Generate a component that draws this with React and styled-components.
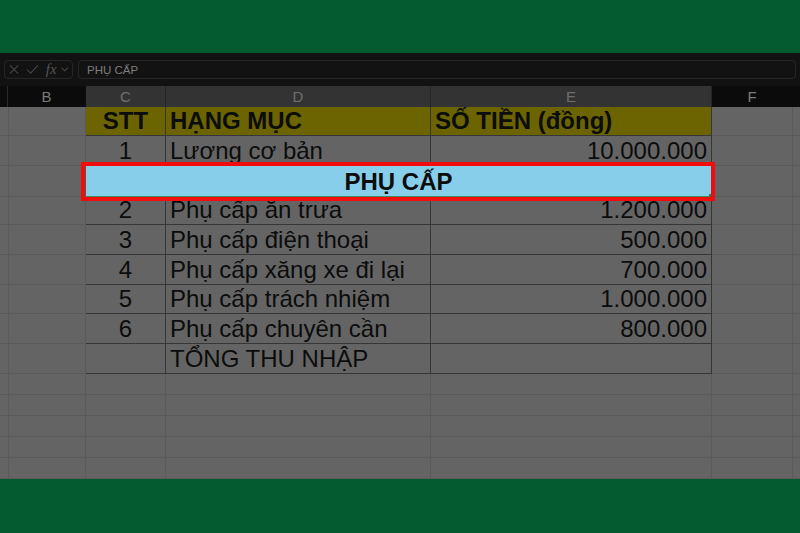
import React from 'react'
import styled, { createGlobalStyle, css } from 'styled-components'

const GlobalStyle = createGlobalStyle`
  html, body {
    margin: 0;
    padding: 0;
    background: #045b2f;
  }
  * {
    box-sizing: border-box;
  }
`

const COLS = '8px 78px 80px 265px 281px 81px 1fr'

const Screen = styled.div`
  width: 800px;
  height: 533px;
  display: flex;
  flex-direction: column;
  overflow: hidden;
  font-family: 'Liberation Sans', Arial, sans-serif;
`

const Band = styled.div`
  height: ${p => p.h}px;
  flex: none;
  background: #045b2f;
`

const FormulaBar = styled.div`
  height: 33px;
  flex: none;
  background: #121212;
  display: flex;
  align-items: center;
  gap: 5px;
  padding: 0 4px;
`

const NameBox = styled.div`
  width: 69px;
  height: 19px;
  border: 1px solid #262626;
  border-radius: 4px;
  display: flex;
  align-items: center;
  gap: 7px;
  padding: 0 4px;
  color: #484848;
`

const FxLabel = styled.span`
  font-family: 'Liberation Serif', serif;
  font-style: italic;
  font-size: 15px;
  line-height: 1;
  color: #555555;
  margin-right: -3px;
`

const FormulaInput = styled.div`
  flex: 1;
  height: 19px;
  border: 1px solid #262626;
  border-radius: 4px;
  display: flex;
  align-items: center;
  padding-left: 8px;
  font-size: 11.5px;
  color: #7d7d7d;
`

const HeaderRow = styled.div`
  height: 21px;
  flex: none;
  display: grid;
  grid-template-columns: ${COLS};
  background: #0b0b0b;
`

const ColHead = styled.div`
  display: flex;
  align-items: center;
  justify-content: center;
  font-size: 15px;
  color: ${p => (p.selected ? '#6f6f6f' : '#7a7a7a')};
  background: ${p => (p.selected ? '#333333' : '#0b0b0b')};
  border-right: 1px solid ${p => (p.selected ? '#262626' : '#0b0b0b')};
  ${p =>
    p.edge &&
    css`
      border-right: 1px solid #2a2a2a;
    `}
`

const Sheet = styled.div`
  flex: 1;
  background: #646464;
  overflow: hidden;
`

const Row = styled.div`
  height: ${p => p.h}px;
  display: grid;
  grid-template-columns: ${COLS};
`

const Cell = styled.div`
  position: relative;
  display: flex;
  align-items: center;
  white-space: nowrap;
  font-size: 24px;
  color: #0c0c0c;
  padding: 0 4px;
  justify-content: ${p => p.align || 'flex-start'};
  font-weight: ${p => (p.bold ? 700 : 400)};
  grid-column: ${p => p.span || 'auto'};
  background: ${p => p.bg || 'transparent'};
  border-right: 1px solid ${p => (p.table ? '#363636' : '#5a5a5a')};
  border-bottom: 1px solid ${p => (p.table ? '#363636' : '#5a5a5a')};
`

const Highlighted = styled(Cell)`
  background: #87ceeb;
  border-bottom: 1px solid #3f8a5a;
  z-index: 2;
  padding-top: 2px;

  &::after {
    content: '';
    position: absolute;
    left: -5px;
    right: -4px;
    top: -4px;
    bottom: -5px;
    border: 4px solid #f20d0d;
    pointer-events: none;
  }
`

const Handle = styled.span`
  position: absolute;
  right: -2px;
  bottom: -2px;
  width: 4px;
  height: 4px;
  background: #2f7a4a;
`

const items = [
  ['1', 'Lương cơ bản', '10.000.000'],
  null,
  ['2', 'Phụ cấp ăn trưa', '1.200.000'],
  ['3', 'Phụ cấp điện thoại', '500.000'],
  ['4', 'Phụ cấp xăng xe đi lại', '700.000'],
  ['5', 'Phụ cấp trách nhiệm', '1.000.000'],
  ['6', 'Phụ cấp chuyên cần', '800.000'],
  ['', 'TỔNG THU NHẬP', ''],
]

const heights = [30, 30, 29, 30, 30, 29, 30, 30]

const Blank = ({ table }) => <Cell table={table} />

export default function App() {
  return (
    <Screen>
      <GlobalStyle />
      <Band h={53} />
      <FormulaBar>
        <NameBox>
          <svg width="11" height="11" viewBox="0 0 11 11" fill="none" stroke="currentColor" strokeWidth="1.1">
            <path d="M1 1l9 9M10 1l-9 9" />
          </svg>
          <svg width="14" height="11" viewBox="0 0 14 11" fill="none" stroke="currentColor" strokeWidth="1.1">
            <path d="M1 5.5l4 4L13 1" />
          </svg>
          <FxLabel>fx</FxLabel>
          <svg width="8" height="5" viewBox="0 0 8 5" fill="none" stroke="currentColor" strokeWidth="1.1">
            <path d="M0.5 0.5l3.5 3.5L7.5 0.5" />
          </svg>
        </NameBox>
        <FormulaInput>PHỤ CẤP</FormulaInput>
      </FormulaBar>
      <HeaderRow>
        <ColHead edge />
        <ColHead>B</ColHead>
        <ColHead selected>C</ColHead>
        <ColHead selected>D</ColHead>
        <ColHead selected>E</ColHead>
        <ColHead>F</ColHead>
        <ColHead />
      </HeaderRow>
      <Sheet>
        <Row h={29}>
          <Blank />
          <Blank />
          <Cell table bold bg="#6b6400" align="center">STT</Cell>
          <Cell table bold bg="#6b6400">HẠNG MỤC</Cell>
          <Cell table bold bg="#6b6400">SỐ TIỀN (đồng)</Cell>
          <Blank />
          <Blank />
        </Row>
        {items.map((item, i) =>
          item ? (
            <Row key={i} h={heights[i]}>
              <Blank />
              <Blank />
              <Cell table align="center">{item[0]}</Cell>
              <Cell table>{item[1]}</Cell>
              <Cell table align="flex-end">{item[2]}</Cell>
              <Blank />
              <Blank />
            </Row>
          ) : (
            <Row key={i} h={heights[i]}>
              <Blank />
              <Blank />
              <Highlighted table bold span="3 / 6" align="center">
                PHỤ CẤP
                <Handle />
              </Highlighted>
              <Blank />
              <Blank />
            </Row>
          )
        )}
        {[0, 1, 2, 3, 4, 5].map(i => (
          <Row key={'e' + i} h={21}>
            <Blank />
            <Blank />
            <Blank />
            <Blank />
            <Blank />
            <Blank />
            <Blank />
          </Row>
        ))}
      </Sheet>
      <Band h={54} />
    </Screen>
  )
}
